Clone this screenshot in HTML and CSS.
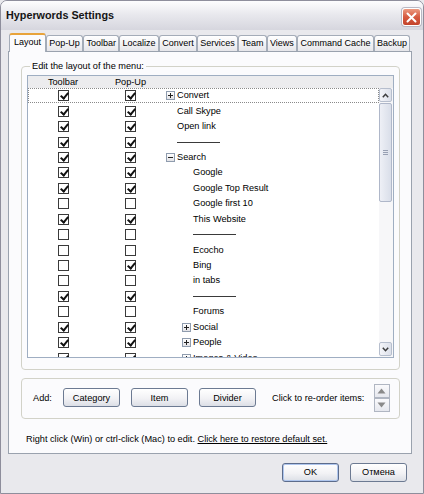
FILE: index.html
```html
<!DOCTYPE html>
<html lang="en">
<head>
<meta charset="utf-8">
<title>Hyperwords Settings</title>
<link rel="stylesheet" href="styles.css">
</head>
<body>
<div class="window">
  <div class="titlebar">
    <span class="title">Hyperwords Settings</span>
    <span class="close"><svg width="11" height="11" viewBox="0 0 11 11"><path d="M1.5 1.5 L9.5 9.5 M9.5 1.5 L1.5 9.5" stroke="#fff" stroke-width="2" stroke-linecap="round"/></svg></span>
  </div>
  <div class="client">
    <div class="tabs">
      <span class="tab active">Layout</span>
      <span class="tab">Pop-Up</span>
      <span class="tab">Toolbar</span>
      <span class="tab">Localize</span>
      <span class="tab">Convert</span>
      <span class="tab">Services</span>
      <span class="tab">Team</span>
      <span class="tab">Views</span>
      <span class="tab">Command Cache</span>
      <span class="tab">Backup</span>
    </div>
    <div class="panel">
      <fieldset class="group">
        <legend>Edit the layout of the menu:</legend>
        <div class="listbox">
          <div class="lheader"><span>Toolbar</span><span>Pop-Up</span><span></span></div>
          <div class="lbody">
            <div class="rows">
              <div class="row focus"><span class="cb on"></span><span class="cb on"></span><span class="node l0"><i class="exp plus"></i>Convert</span></div>
              <div class="row"><span class="cb on"></span><span class="cb on"></span><span class="node l1">Call Skype</span></div>
              <div class="row"><span class="cb on"></span><span class="cb on"></span><span class="node l1">Open link</span></div>
              <div class="row"><span class="cb on"></span><span class="cb on"></span><span class="node l1"><b class="divider"></b></span></div>
              <div class="row"><span class="cb on"></span><span class="cb on"></span><span class="node l0"><i class="exp"></i>Search</span></div>
              <div class="row"><span class="cb on"></span><span class="cb on"></span><span class="node l2">Google</span></div>
              <div class="row"><span class="cb on"></span><span class="cb on"></span><span class="node l2">Google Top Result</span></div>
              <div class="row"><span class="cb"></span><span class="cb"></span><span class="node l2">Google first 10</span></div>
              <div class="row"><span class="cb on"></span><span class="cb on"></span><span class="node l2">This Website</span></div>
              <div class="row"><span class="cb"></span><span class="cb"></span><span class="node l2"><b class="divider"></b></span></div>
              <div class="row"><span class="cb"></span><span class="cb"></span><span class="node l2">Ecocho</span></div>
              <div class="row"><span class="cb"></span><span class="cb on"></span><span class="node l2">Bing</span></div>
              <div class="row"><span class="cb"></span><span class="cb"></span><span class="node l2">in tabs</span></div>
              <div class="row"><span class="cb on"></span><span class="cb on"></span><span class="node l2"><b class="divider"></b></span></div>
              <div class="row"><span class="cb"></span><span class="cb"></span><span class="node l2">Forums</span></div>
              <div class="row"><span class="cb on"></span><span class="cb on"></span><span class="node l2i"><i class="exp plus"></i>Social</span></div>
              <div class="row"><span class="cb on"></span><span class="cb on"></span><span class="node l2i"><i class="exp plus"></i>People</span></div>
              <div class="row"><span class="cb on"></span><span class="cb on"></span><span class="node l2i"><i class="exp plus"></i>Images &amp; Video</span></div>
            </div>
            <div class="vscroll">
              <span class="sb-btn"><svg width="7" height="5" viewBox="0 0 7 5"><path d="M0.8 4.2 L3.5 1.3 L6.2 4.2" fill="none" stroke="#3c3c3c" stroke-width="1.5"/></svg></span>
              <span class="sb-thumb"><i></i><i></i><i></i></span>
              <span class="sb-track"></span>
              <span class="sb-btn"><svg width="7" height="5" viewBox="0 0 7 5"><path d="M0.8 0.8 L3.5 3.7 L6.2 0.8" fill="none" stroke="#3c3c3c" stroke-width="1.5"/></svg></span>
            </div>
          </div>
        </div>
      </fieldset>
      <div class="addbox">
        <span class="addlabel">Add:</span>
        <button class="btn">Category</button>
        <button class="btn">Item</button>
        <button class="btn">Divider</button>
        <span class="reorder">Click to re-order items:</span>
        <span class="updown">
          <span class="ud"><svg width="9" height="6" viewBox="0 0 9 6"><path d="M4.5 0.5 L8.5 5.5 L0.5 5.5 Z" fill="#8a8a8a"/></svg></span>
          <span class="ud"><svg width="9" height="6" viewBox="0 0 9 6"><path d="M0.5 0.5 L8.5 0.5 L4.5 5.5 Z" fill="#8a8a8a"/></svg></span>
        </span>
      </div>
      <p class="hint">Right click (Win) or ctrl-click (Mac) to edit. <a href="#">Click here to restore default set.</a></p>
    </div>
    <div class="actions">
      <button class="btn default">OK</button>
      <button class="btn">Отмена</button>
    </div>
  </div>
</div>
</body>
</html>
```
FILE: styles.css
```css
* { box-sizing: border-box; }
html, body { margin: 0; padding: 0; }
body {
  width: 424px;
  height: 494px;
  overflow: hidden;
  font-family: "Liberation Sans", Arial, sans-serif;
  font-size: 9.2px;
  color: #000;
  background: #E9E9ED;
}
.window {
  width: 424px;
  height: 494px;
  border: 1px solid #8E8E9C;
  border-radius: 7px 7px 0 0;
  background: #E9E9ED;
  display: flex;
  flex-direction: column;
  overflow: hidden;
}
.titlebar {
  height: 29px;
  flex: none;
  display: flex;
  align-items: center;
  justify-content: space-between;
  padding: 0 2px 0 5px;
  background: linear-gradient(#FDFDFE, #E9E9EE 45%, #D6D6DE);
}
.title {
  font-weight: bold;
  font-size: 10.8px;
  color: #151515;
  margin-top: -1px;
}
.close {
  width: 19px;
  height: 18px;
  margin-top: 3px;
  border: 1px solid #fff;
  border-radius: 3px;
  background: linear-gradient(#EC9A80, #D65A40 50%, #C3432B);
  box-shadow: 0 0 0 1px #B8B8C4;
  display: flex;
  align-items: center;
  justify-content: center;
}
.client {
  flex: 1;
  display: flex;
  flex-direction: column;
}
.tabs {
  height: 21px;
  flex: none;
  display: flex;
  align-items: flex-end;
  padding-left: 8px;
}
.tab {
  height: 16px;
  padding: 0 2.3px;
  border: 1px solid #A4ACB8;
  border-bottom: none;
  border-radius: 3px 3px 0 0;
  background: linear-gradient(#FFFFFF, #F0F0F3 60%, #E6E6EA);
  line-height: 15px;
  font-size: 9px;
  white-space: nowrap;
}
.tab.active {
  height: 19px;
  padding: 0 4px;
  margin-bottom: -1px;
  border-top: 2px solid #E8A33A;
  background: #FBFBFD;
  line-height: 15px;
  position: relative;
  z-index: 1;
}
.panel {
  margin-left: 7px;
  width: 404px;
  height: 403px;
  flex: none;
  border: 1px solid #9AA2AE;
  background: #FBFBFD;
  padding: 8.5px 11px 0 12px;
  display: flex;
  flex-direction: column;
}
.group {
  margin: 0;
  padding: 3.5px 5px 11px;
  border: 1px solid #D2D2C8;
  border-radius: 4px;
  min-width: 0;
}
.group legend {
  padding: 0 2px;
  margin-left: 3px;
  line-height: 11px;
}
.listbox {
  height: 283px;
  border: 1px solid #9FAEC2;
  background: #fff;
  display: flex;
  flex-direction: column;
}
.lheader {
  height: 12px;
  flex: none;
  background: #ECECEE;
  display: grid;
  grid-template-columns: 70px 65px 1fr;
  line-height: 12px;
  text-align: center;
}
.lbody {
  flex: 1;
  display: flex;
  overflow: hidden;
}
.rows {
  flex: 1;
  overflow: hidden;
}
.row {
  height: 15.44px;
  display: grid;
  grid-template-columns: 70px 65px 1fr;
  align-items: center;
  justify-items: center;
}
.row.focus {
  outline: 1px dotted #8a8a8a;
  outline-offset: -1px;
}
.cb {
  width: 11px;
  height: 11px;
  border: 1px solid #3a3a3a;
  background: #fff;
  position: relative;
}
.cb.on::after {
  content: "";
  position: absolute;
  left: 3px;
  top: 0px;
  width: 3px;
  height: 6px;
  border-right: 2px solid #111;
  border-bottom: 2px solid #111;
  transform: rotate(40deg);
}
.node {
  justify-self: stretch;
  display: flex;
  align-items: center;
  white-space: nowrap;
  line-height: 15px;
}
.node.l0 { padding-left: 3px; }
.node.l1 { padding-left: 14px; }
.node.l2 { padding-left: 30px; }
.node.l2i { padding-left: 19px; }
.exp {
  width: 9px;
  height: 9px;
  margin-right: 2px;
  border: 1px solid #8F9CAE;
  background: linear-gradient(#FFFFFF, #E2E2E6);
  position: relative;
  flex: none;
}
.exp::before {
  content: "";
  position: absolute;
  left: 1px;
  top: 3px;
  width: 5px;
  height: 1px;
  background: #222;
}
.exp.plus::after {
  content: "";
  position: absolute;
  left: 3px;
  top: 1px;
  width: 1px;
  height: 5px;
  background: #222;
}
.divider {
  display: block;
  width: 43px;
  height: 1px;
  background: #3a3a3a;
}
.vscroll {
  width: 14px;
  flex: none;
  display: flex;
  flex-direction: column;
  background: #F7F7F9;
  padding: 0 1px 1px 0;
}
.sb-btn {
  height: 14px;
  flex: none;
  border: 1px solid #B6BECD;
  border-radius: 2px;
  background: linear-gradient(90deg, #F4F5F9, #DCE0EA);
  display: flex;
  align-items: center;
  justify-content: center;
}
.sb-thumb {
  height: 99px;
  flex: none;
  margin-top: 1px;
  border: 1px solid #AFB7C9;
  border-radius: 2px;
  background: linear-gradient(90deg, #EEF0F6, #D9DEE9);
  display: flex;
  flex-direction: column;
  align-items: center;
  justify-content: center;
  gap: 1px;
}
.sb-thumb i {
  width: 5px;
  height: 1px;
  background: #98A0B3;
}
.sb-track { flex: 1; }
.addbox {
  margin-top: 8px;
  height: 41px;
  flex: none;
  border: 1px solid #D2D2C8;
  border-radius: 4px;
  display: flex;
  align-items: center;
  padding: 0 0 2px 11px;
}
.addlabel { width: 19px; }
.btn {
  width: 57px;
  height: 18.5px;
  margin-left: 11px;
  padding: 0;
  border: 1px solid #6C7A92;
  border-radius: 3px;
  background: linear-gradient(#FFFFFF, #F2F2F5 55%, #DCDFE6);
  font-family: inherit;
  font-size: 9.2px;
  color: #000;
}
.reorder { margin-left: 16px; white-space: nowrap; }
.updown {
  margin-left: 9.5px;
  width: 16px;
  display: flex;
  flex-direction: column;
}
.ud {
  height: 14px;
  border: 1px solid #B0B6C2;
  background: linear-gradient(#FAFAFC, #E6E8EE);
  display: flex;
  align-items: center;
  justify-content: center;
}
.hint {
  margin: 14.5px 0 0 5px;
  line-height: 11px;
  white-space: nowrap;
}
.hint a { color: #000; text-decoration: underline; }
.actions {
  display: flex;
  justify-content: flex-end;
  padding: 8.5px 16px 0 0;
}
.actions .btn { height: 19px; }
.btn.default {
  border-color: #5C6C8C;
  box-shadow: inset 0 0 0 1px #AFC6EE;
}
```
